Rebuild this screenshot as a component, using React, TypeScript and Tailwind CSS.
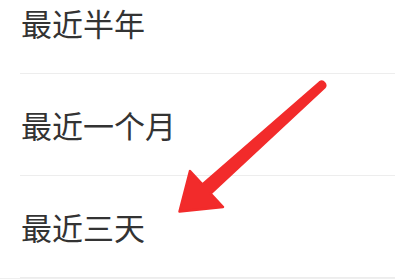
const options = ["最近半年", "最近一个月", "最近三天"];

function Arrow() {
  return (
    <svg
      className="absolute left-0 top-0 pointer-events-none"
      width="395"
      height="279"
      viewBox="0 0 395 279"
    >
      <path
        d="M319.7 82.4 L202.5 184.5 L190 171 L179.5 211.5 L223 207 L210.5 193.5 L324.3 87.6 A3.5 3.5 0 0 0 319.7 82.4 Z"
        fill="#f22b2b"
        stroke="#f22b2b"
        strokeWidth="2.5"
        strokeLinejoin="round"
      />
    </svg>
  );
}

export default function App() {
  return (
    <div className="relative h-[279px] w-[395px] overflow-hidden bg-white">
      <ul className="-mt-[28px] flex flex-col">
        {options.map((label) => (
          <li key={label} className="pl-5">
            <div className="flex h-[101px] items-center pl-px text-[31px] leading-none text-[#333333] [font-family:'Noto_Sans_CJK_SC',sans-serif]">
              {label}
            </div>
            <div className="h-px bg-[#ededed]" />
          </li>
        ))}
      </ul>
      <div className="absolute bottom-0 left-0 h-px w-full bg-[#efefef]" />
      <Arrow />
    </div>
  );
}
